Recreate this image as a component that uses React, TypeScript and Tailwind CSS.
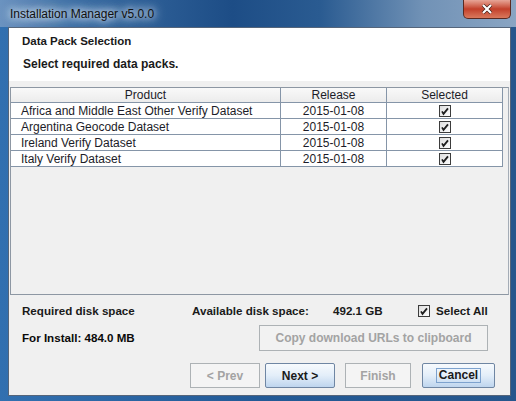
import React from 'react';

const rows = [
  { product: 'Africa and Middle East Other Verify Dataset', release: '2015-01-08' },
  { product: 'Argentina Geocode Dataset', release: '2015-01-08' },
  { product: 'Ireland Verify Dataset', release: '2015-01-08' },
  { product: 'Italy Verify Dataset', release: '2015-01-08' },
];

function Check() {
  return (
    <svg width="12" height="12" viewBox="0 0 12 12" className="block">
      <defs>
        <linearGradient id="cb" x1="0" y1="0" x2="1" y2="1">
          <stop offset="0" stopColor="#dcdcdc" />
          <stop offset="1" stopColor="#ffffff" />
        </linearGradient>
      </defs>
      <rect x="0.5" y="0.5" width="11" height="11" fill="url(#cb)" stroke="#3c3c3c" />
      <path d="M3 6.4 L4.5 8.9 L9 3.4" fill="none" stroke="#1e1e1e" strokeWidth="1.8" />
    </svg>
  );
}

function Btn({ label, w, disabled, focus }: { label: string; w: string; disabled?: boolean; focus?: boolean }) {
  if (disabled) {
    return (
      <div className={`${w} h-[25px] flex items-center justify-center border border-[#adb2b5] bg-[#f4f4f4] text-[#a3a3a3] font-bold text-[12px]`}>
        {label}
      </div>
    );
  }
  return (
    <div
      className={`${w} h-[25px] flex items-center justify-center rounded-[2px] border border-[#6f86a3] bg-gradient-to-b from-[#f7fafd] via-[#e3eef9] to-[#bed5ee] text-[#1a1a1a] font-bold text-[12px]`}
    >
      <span className={focus ? 'px-[2px] leading-[13px] border border-[#7da2ce]' : ''}>{label}</span>
    </div>
  );
}

export default function App() {
  return (
    <div
      className="w-[516px] h-[401px] flex flex-col pl-[8px] pr-[5px] pb-[5px] overflow-hidden bg-gradient-to-r from-[#3270b0] via-[#235a96] to-[#26568c]"
      style={{ fontFamily: '"Liberation Sans", Arial, sans-serif' }}
    >
      <div className="relative -ml-[8px] -mr-[5px] pl-[10px] h-[27px] flex items-start justify-between bg-[linear-gradient(to_right,#6b93c0_0%,#3a6ca3_15%,#1d4d86_45%,#2a5b91_62%,#7192b6_82%,#8aa5c3_100%)]">
        <span className="mt-[5px] text-[12px] text-[#101010] [text-shadow:0_0_6px_#dbe6f2,0_0_10px_#dbe6f2,0_0_14px_#dbe6f2]">
          Installation Manager v5.0.0
        </span>
        <div className="mr-[5px] w-[48px] h-[19px] rounded-b-[5px] border border-t-0 border-[#5a2a22] bg-gradient-to-b from-[#e6a597] via-[#c23f2a] to-[#d9785c] flex items-center justify-center">
          <svg width="12" height="10" viewBox="0 0 12 10">
            <path d="M2 1 L10 9 M10 1 L2 9" stroke="#3a1a14" strokeWidth="3.4" />
            <path d="M2 1 L10 9 M10 1 L2 9" stroke="#ffffff" strokeWidth="2.2" />
          </svg>
        </div>
      </div>

      <div className="flex-1 flex flex-col border border-[#55657a] bg-[#f0f0f0]">
        <div className="h-[53px] bg-white pl-[13px] pt-[6px] text-[#1a1a1a] font-bold">
          <div className="text-[11.5px] leading-[14px]">Data Pack Selection</div>
          <div className="mt-[9px] text-[12px] leading-[14px] pl-[1px]">Select required data packs.</div>
        </div>

        <div className="mt-[6px] mx-[1px] h-[208px] border border-[#8d97a3] border-r-[#a4acb6]">
          <div className="w-[492px] text-[12px] text-[#1c1c28]">
            <div className="flex h-[15px] leading-[15px] bg-gradient-to-b from-[#f9f9f9] to-[#ececec] border-b border-[#8595a8]">
              <div className="w-[270px] text-center border-r border-[#8595a8]">Product</div>
              <div className="w-[106px] text-center border-r border-[#8595a8]">Release</div>
              <div className="w-[116px] text-center border-r border-[#8595a8]">Selected</div>
            </div>
            {rows.map((r) => (
              <div key={r.product} className="flex h-[16px] leading-[16px] bg-white border-b border-[#8595a8]">
                <div className="w-[270px] pl-[10px] border-r border-[#8595a8]">{r.product}</div>
                <div className="w-[106px] text-center border-r border-[#8595a8]">{r.release}</div>
                <div className="w-[116px] flex items-center justify-center border-r border-[#8595a8]">
                  <Check />
                </div>
              </div>
            ))}
          </div>
        </div>

        <div className="mt-[9px] pl-[13px] h-[14px] flex items-center text-[11.6px] font-bold text-[#1a1a1a]">
          <div className="w-[170px]">Required disk space</div>
          <div className="w-[141px]">Available disk space:</div>
          <div className="w-[85px]">492.1 GB</div>
          <Check />
          <div className="ml-[6px]">Select All</div>
        </div>

        <div className="mt-[7px] pl-[13px] pr-[22px] h-[26px] flex items-center justify-between text-[12px] font-bold">
          <div className="text-[11.6px] text-[#0a0a0a]">For Install: 484.0 MB</div>
          <div className="w-[229px] h-[26px] flex items-center justify-center border border-[#adb2b5] bg-[#f2f2f2] text-[#a3a3a3]">
            Copy download URLs to clipboard
          </div>
        </div>

        <div className="mt-[12px] pr-[15px] flex justify-end">
          <Btn label="< Prev" w="w-[70px]" disabled />
          <div className="w-[5px]" />
          <Btn label="Next >" w="w-[70px]" />
          <div className="w-[10px]" />
          <Btn label="Finish" w="w-[66px]" disabled />
          <div className="w-[11px]" />
          <Btn label="Cancel" w="w-[73px]" focus />
        </div>
      </div>
    </div>
  );
}
